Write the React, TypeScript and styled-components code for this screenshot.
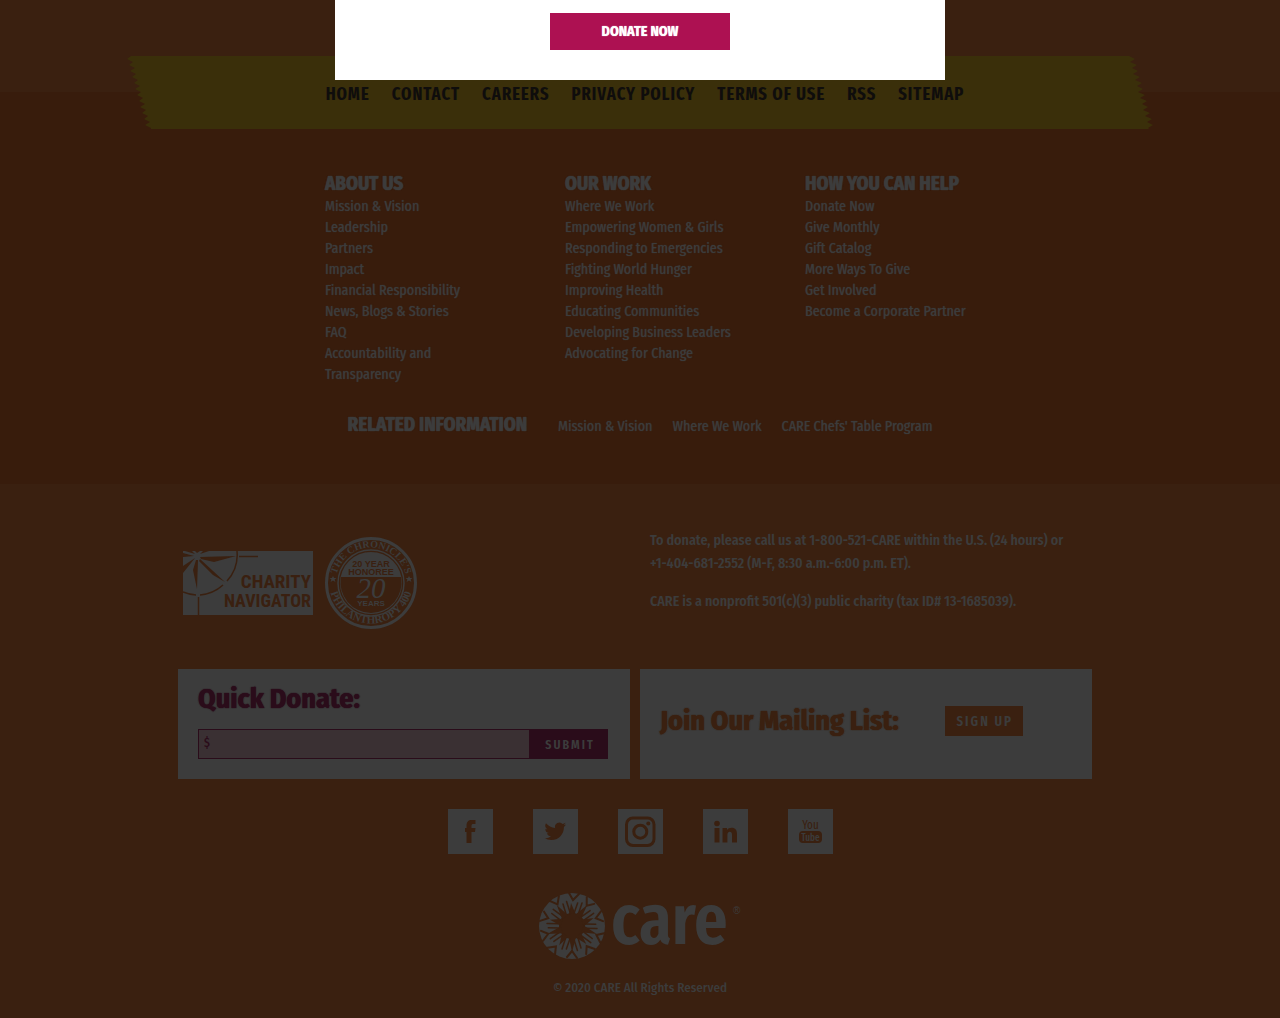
import React from "react";
import styled, { createGlobalStyle } from "styled-components";

const color = {
  earth: "#3a2010",
  soil: "#381c0c",
  olive: "rgba(58, 48, 10, 0.96)",
  ash: "#3c3c3c",
  ink: "#0f0d0c",
  wine: "#2a0c1a",
  wineTint: "#3a3033",
  magenta: "#ad1152",
};

const narrow = `"Fira Sans Extra Condensed", "Fira Sans Condensed", "Roboto Condensed", sans-serif`;

const GlobalStyle = createGlobalStyle`
  * { box-sizing: border-box; }
  body {
    margin: 0;
    background: ${color.earth};
    color: ${color.ash};
    font: 400 14px/21px "Fira Sans Condensed", "Roboto Condensed", "Open Sans", sans-serif;
  }
  ul { list-style: none; margin: 0; padding: 0; }
  h2, h3, p { margin: 0; }
  a { color: inherit; text-decoration: none; }
  button, input { font: inherit; color: inherit; border: 0; border-radius: 0; margin: 0; }
`;

const Page = styled.div`
  min-height: 100vh;
  padding-top: 92px;
`;

const Modal = styled.div`
  position: fixed;
  top: 0;
  left: 50%;
  transform: translateX(-50%);
  width: 610px;
  max-width: 100%;
  padding: 13px 20px 30px;
  display: flex;
  justify-content: center;
  background: #fff;
  z-index: 2;
`;

const DonateButton = styled.button`
  width: 180px;
  height: 37px;
  background: ${color.magenta};
  color: #fff;
  font-weight: 700;
  text-transform: uppercase;
  text-shadow: 0 0 1px currentColor;
`;

const Directory = styled.section`
  background: ${color.soil};
  padding-bottom: 47px;
`;

const ribbonTeeth = 12;
const ribbonEdge = (side: "left" | "right") => {
  const points: string[] = [];
  for (let i = 0; i < ribbonTeeth; i++) {
    const drift = Math.round((i * 20) / ribbonTeeth);
    const tip = i * 6 + 3;
    const notch = i * 6 + 6;
    points.push(
      side === "right"
        ? `calc(100% - ${18 - drift}px) ${tip}px, calc(100% - ${23 - drift}px) ${notch}px`
        : `${drift}px ${tip}px, ${drift + 6}px ${notch}px`
    );
  }
  return side === "right" ? points : points.reverse();
};
const reversedLeft = ribbonEdge("left").map((pair) => pair.split(", ").reverse().join(", "));

const Ribbon = styled.nav`
  position: relative;
  top: -36px;
  max-width: 1026px;
  min-height: 73px;
  margin: 0 auto -36px;
  padding: 27px 20px 0;
  background: ${color.olive};
  clip-path: polygon(
    4px 0, calc(100% - 24px) 0,
    ${ribbonEdge("right").join(", ")},
    calc(100% - 4px) 100%, 24px 100%,
    ${reversedLeft.join(", ")}
  );
`;

const RibbonList = styled.ul`
  display: flex;
  flex-wrap: wrap;
  justify-content: center;
  gap: 0 22px;
  padding-left: 10px;
  color: ${color.ink};
  font-family: ${narrow};
  font-size: 18px;
  line-height: 22px;
  font-weight: 700;
  letter-spacing: 1px;
  text-transform: uppercase;
`;

const Columns = styled.div`
  display: grid;
  grid-template-columns: repeat(3, 1fr);
  max-width: 720px;
  margin: 0 auto;
  padding-top: 42px;
`;

const Column = styled.div`
  padding: 0 15px 0 45px;
  text-shadow: 0 0 1px currentColor;
  &:last-child { padding-right: 0; }
`;

const Heading = styled.h3`
  font-size: 19px;
  line-height: 25px;
  font-weight: 700;
  text-transform: uppercase;
  text-shadow: 0 0 1px currentColor, 0 0 1px currentColor;
`;

const Related = styled.div`
  display: flex;
  flex-wrap: wrap;
  justify-content: center;
  align-items: baseline;
  gap: 0 31px;
  padding-top: 27px;
  text-shadow: 0 0 1px currentColor;
`;

const RelatedList = styled.ul`
  display: flex;
  flex-wrap: wrap;
  gap: 0 20px;
`;

const Footer = styled.footer`
  max-width: 924px;
  margin: 0 auto;
  padding-top: 45px;
`;

const Halves = styled.div`
  display: grid;
  grid-template-columns: repeat(2, 1fr);
`;

const Badges = styled.div`
  display: flex;
  align-items: center;
  gap: 12px;
  height: 108px;
  padding-left: 5px;
`;

const Contact = styled.div`
  display: grid;
  align-content: start;
  gap: 15px;
  padding: 0 20px 0 10px;
  font-weight: 600;
  line-height: 23px;
`;

const Phone = styled.span`
  white-space: nowrap;
`;

const Cards = styled(Halves)`
  padding-top: 32px;
`;

const Card = styled.div<{ $inline?: boolean }>`
  display: flex;
  flex-direction: ${(p) => (p.$inline ? "row" : "column")};
  align-items: ${(p) => (p.$inline ? "center" : "stretch")};
  gap: ${(p) => (p.$inline ? "46px" : "10px")};
  min-height: 110px;
  margin-right: 10px;
  padding: ${(p) => (p.$inline ? "0 20px 6px" : "10px 22px 20px 20px")};
  background: ${color.ash};
`;

const CardTitle = styled.h2<{ $tone: string }>`
  color: ${(p) => p.$tone};
  font-size: 28px;
  line-height: 40px;
  font-weight: 700;
  text-shadow: 0 0 1px currentColor, 0 0 1px currentColor;
`;

const DonateForm = styled.form`
  display: flex;
  height: 30px;
`;

const Amount = styled.input`
  flex: 1;
  min-width: 0;
  padding: 0 5px 2px;
  font-size: 12px;
  background: ${color.wineTint};
  &&& { border: 1px solid ${color.wine}; }
  &::placeholder { color: ${color.wine}; opacity: 1; font-weight: 500; }
`;

const ActionButton = styled.button<{ $tone: string; $size: number }>`
  width: 78px;
  height: 30px;
  padding: 0 0 0 2px;
  background: ${(p) => p.$tone};
  color: ${color.ash};
  font-family: ${narrow};
  font-size: ${(p) => p.$size}px;
  font-weight: 600;
  letter-spacing: 2px;
  text-transform: uppercase;
`;

const Social = styled.ul`
  display: flex;
  justify-content: center;
  gap: 40px;
  padding-top: 30px;
`;

const SocialLink = styled.a`
  display: block;
  width: 45px;
  height: 45px;
  background: ${color.ash};
  color: ${color.earth};
  svg { display: block; }
`;

const Brand = styled.div`
  display: flex;
  flex-direction: column;
  align-items: center;
  gap: 17px;
  padding: 38px 0 20px;
  font-size: 13px;
  font-weight: 500;
  svg { overflow: visible; }
`;

const menu = ["Home", "Contact", "Careers", "Privacy Policy", "Terms of Use", "RSS", "Sitemap"];

const columns = [
  {
    title: "About Us",
    links: ["Mission & Vision", "Leadership", "Partners", "Impact", "Financial Responsibility", "News, Blogs & Stories", "FAQ", "Accountability and Transparency"],
  },
  {
    title: "Our Work",
    links: ["Where We Work", "Empowering Women & Girls", "Responding to Emergencies", "Fighting World Hunger", "Improving Health", "Educating Communities", "Developing Business Leaders", "Advocating for Change"],
  },
  {
    title: "How You Can Help",
    links: ["Donate Now", "Give Monthly", "Gift Catalog", "More Ways To Give", "Get Involved", "Become a Corporate Partner"],
  },
];

const related = ["Mission & Vision", "Where We Work", "CARE Chefs' Table Program"];

const Links = ({ items }: { items: string[] }) => (
  <>
    {items.map((item) => (
      <li key={item}><a href="#">{item}</a></li>
    ))}
  </>
);

const CharityNavigator = () => (
  <svg width="130" height="64" viewBox="0 0 130 64" role="img" aria-label="Charity Navigator">
    <rect width="130" height="64" fill={color.ash} />
    <g fill="none" stroke={color.earth} strokeWidth="1.5">
      <path d="M54 0A39 39 0 0 1 44 30M40 34A39 39 0 0 1 17 44M13 44A39 39 0 0 1 0 41M15.500 46v18M56 5.500h19" />
    </g>
    <g fill={color.earth}>
      <path d="M17 6L53 5L31 11L18 8ZM17 8L42 31L30 24L16 10ZM15 9L14 38L10 19L13 9ZM12 7L0 22V15ZM11 5L0 6V2ZM12 3L2 0H9ZM14 2L12 0H17ZM17 3L20 0H26Z" />
      <g fontFamily="Roboto Condensed, Liberation Sans, sans-serif" fontWeight="700" textAnchor="end">
        <text x="128" y="37" fontSize="19">CHARITY</text>
        <text x="128" y="56" fontSize="18">NAVIGATOR</text>
      </g>
    </g>
  </svg>
);

const Seal = () => (
  <svg width="92" height="92" viewBox="0 0 92 92" role="img" aria-label="The Chronicle's Philanthropy 400, 20 year honoree">
    <defs>
      <path id="sealTop" d="M10.500 46A35.500 35.500 0 0 1 81.500 46" />
      <path id="sealBottom" d="M4.500 38A42 42 0 1 0 87.500 38" />
    </defs>
    <g fill="none" stroke={color.ash}>
      <circle cx="46" cy="46" r="44.500" strokeWidth="3" />
      <circle cx="46" cy="46" r="33" strokeWidth="1.500" />
    </g>
    <circle cx="46" cy="46" r="31" fill={color.ash} />
    <path d="M16 40H76A30.500 30.500 0 1 1 16 40Z" fill={color.earth} />
    <g fill={color.ash} fontFamily="Liberation Serif, serif" fontSize="10" fontWeight="700">
      <text textAnchor="middle"><textPath href="#sealTop" startOffset="50%">THE CHRONICLE'S</textPath></text>
      <text textAnchor="middle" fontSize="11"><textPath href="#sealBottom" startOffset="50%">PHILANTHROPY 400</textPath></text>
      <text x="46" y="61" textAnchor="middle" fontSize="29" fontWeight="400" fontStyle="italic">20</text>
    </g>
    <g fontFamily="Liberation Sans, sans-serif" fontWeight="700" textAnchor="middle" fontSize="9">
      <text x="46" y="30" fill={color.earth}>20 YEAR</text>
      <text x="46" y="38" fill={color.earth}>HONOREE</text>
      <text x="46" y="69" fontSize="8" fill={color.ash}>YEARS</text>
    </g>
    <g fill={color.ash}>
      <path d="M8 39l1 2h2.500l-2 1.500l1 2.500l-2.500-1.500l-2.500 1.500l1-2.500l-2-1.500h2.500Z" />
      <path d="M84 39l1 2h2.500l-2 1.500l1 2.500l-2.500-1.500l-2.500 1.500l1-2.500l-2-1.500h2.500Z" />
    </g>
  </svg>
);

const socials = [
  {
    name: "Facebook",
    art: <path fill="currentColor" d="M18.500 34V23H17v-4h1.500v-2.500c0-3.500 1.800-5.500 5-5.500H27.500v4h-2c-1.500 0-2 .6-2 2v2h4l-.5 4H23.500v11Z" />,
  },
  {
    name: "Twitter",
    art: (
      <path fill="currentColor" transform="translate(11.500 11.500) scale(.9)" d="M23.950 4.570a10 10 0 0 1-2.820.780 4.960 4.960 0 0 0 2.160-2.720c-.950.550-2 .950-3.130 1.190a4.920 4.920 0 0 0-8.380 4.480C7.690 8.090 4.070 6.130 1.640 3.160a4.930 4.930 0 0 0 1.520 6.570 4.900 4.900 0 0 1-2.230-.610v.060a4.920 4.920 0 0 0 3.950 4.830 5 5 0 0 1-2.210.080 4.940 4.940 0 0 0 4.600 3.420A9.870 9.870 0 0 1 0 19.540a14 14 0 0 0 7.550 2.210c9.050 0 14-7.500 14-13.980l-.020-.640a9.940 9.940 0 0 0 2.460-2.550Z" />
    ),
  },
  {
    name: "Instagram",
    art: (
      <g fill="none" stroke="currentColor" strokeWidth="3">
        <rect x="8.500" y="9" width="27.500" height="27.500" rx="6.500" />
        <circle cx="22.300" cy="22.700" r="6.500" />
        <circle cx="30.300" cy="14.600" r="2" fill="currentColor" stroke="none" />
      </g>
    ),
  },
  {
    name: "LinkedIn",
    art: (
      <g fill="currentColor">
        <circle cx="14" cy="14.500" r="2.800" />
        <path d="M11.500 19h5v14.500h-5ZM19.500 19h4.500v2c1-1.500 2.500-2.300 4.500-2.300 4 0 5.500 2.300 5.500 6.300v8.500h-5v-7.500c0-2-.5-3.300-2.200-3.300S24.400 24 24.400 26v7.500h-4.900Z" />
      </g>
    ),
  },
  {
    name: "YouTube",
    art: (
      <g fontFamily="Fira Sans Extra Condensed, Fira Sans Condensed, sans-serif" fontWeight="400" textAnchor="middle">
        <text x="22.500" y="20" fontSize="12" fill="currentColor">You</text>
        <rect x="11" y="22" width="23" height="12" rx="4" fill="currentColor" />
        <text x="22.500" y="31.500" fontSize="10" fontWeight="500" fill={color.ash}>Tube</text>
      </g>
    ),
  },
];

const rays = Array.from({ length: 10 }, (_, i) => i * 36);

const CareLogo = () => (
  <svg width="204" height="68" viewBox="0 0 204 68" role="img" aria-label="CARE">
    <circle cx="34" cy="34" r="33" fill={color.ash} />
    <circle cx="34" cy="34" r="13" fill={color.earth} />
    {rays.map((angle, i) => (
      <g key={angle} transform={`rotate(${angle} 34 34)`}>
        <path d={i % 2 ? "M30 23L34 8L37 23Z" : "M31 23L33 11L38 23Z"} fill={color.earth} />
        <g fill="none" stroke={color.earth} strokeLinecap="round">
          <path d="M40 23L44 11M28 22L25 12" strokeWidth="1.500" />
          <path d={i % 3 ? "M29 2L34 9L39 3" : "M31 1L35 8L41 2"} strokeWidth="2" />
        </g>
      </g>
    ))}
    <g fill={color.ash}>
      <text x="73" y="52" fontFamily="Fira Sans Extra Condensed, Fira Sans Condensed, sans-serif" fontSize="72" fontWeight="600">care</text>
      <text x="195" y="22" fontFamily="Liberation Sans, sans-serif" fontSize="10">®</text>
    </g>
  </svg>
);

export default function App() {
  return (
    <Page>
      <GlobalStyle />
      <Modal role="dialog" aria-label="Donate">
        <DonateButton type="button">Donate Now</DonateButton>
      </Modal>

      <Directory>
        <Ribbon>
          <RibbonList><Links items={menu} /></RibbonList>
        </Ribbon>
        <Columns>
          {columns.map((column) => (
            <Column key={column.title}>
              <Heading>{column.title}</Heading>
              <ul><Links items={column.links} /></ul>
            </Column>
          ))}
        </Columns>
        <Related>
          <Heading>Related Information</Heading>
          <RelatedList><Links items={related} /></RelatedList>
        </Related>
      </Directory>

      <Footer>
        <Halves>
          <Badges>
            <CharityNavigator />
            <Seal />
          </Badges>
          <Contact>
            <p>To donate, please call us at 1-800-521-CARE within the U.S. (24 hours) or <Phone>+1-404-681-2552</Phone> (M-F, 8:30 a.m.-6:00 p.m. ET).</p>
            <p>CARE is a nonprofit 501(c)(3) public charity (tax ID# 13-1685039).</p>
          </Contact>
        </Halves>
        <Cards>
          <Card>
            <CardTitle as="label" htmlFor="amount" $tone={color.wine}>Quick Donate:</CardTitle>
            <DonateForm>
              <Amount id="amount" type="text" placeholder="$" />
              <ActionButton type="button" $tone={color.wine} $size={13}>Submit</ActionButton>
            </DonateForm>
          </Card>
          <Card $inline>
            <CardTitle $tone={color.earth}>Join Our Mailing List:</CardTitle>
            <ActionButton type="button" $tone={color.earth} $size={14}>Sign Up</ActionButton>
          </Card>
        </Cards>
        <Social>
          {socials.map((item) => (
            <li key={item.name}>
              <SocialLink href="#" aria-label={item.name}>
                <svg width="45" height="45" viewBox="0 0 45 45" aria-hidden="true">{item.art}</svg>
              </SocialLink>
            </li>
          ))}
        </Social>
        <Brand>
          <CareLogo />
          <p>© 2020 CARE All Rights Reserved</p>
        </Brand>
      </Footer>
    </Page>
  );
}
